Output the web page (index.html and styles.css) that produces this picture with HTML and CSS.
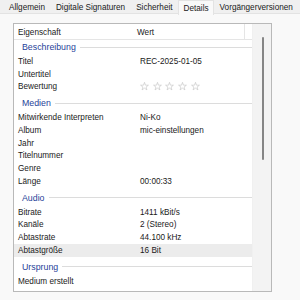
FILE: index.html
```html
<!DOCTYPE html>
<html>
	<head>
		<meta charset="UTF-8">
		<title>Eigenschaften</title>
		<link rel="stylesheet" href="styles.css">
	</head>
	<body>
		<div class="tabs">
			<span class="tab first">Allgemein</span>
			<span class="tab">Digitale Signaturen</span>
			<span class="tab">Sicherheit</span>
			<span class="tab active">Details</span>
			<span class="tab">Vorgängerversionen</span>
		</div>
		<div class="panel">
			<div class="list">
				<div class="view">
					<div class="head">
						<span class="c1">Eigenschaft</span>
						<span class="c2">Wert</span>
					</div>
					<div class="group first">Beschreibung</div>
					<div class="row"><span>Titel</span><span>REC-2025-01-05</span></div>
					<div class="row"><span>Untertitel</span><span></span></div>
					<div class="row">
						<span>Bewertung</span>
						<span class="stars">
							<svg viewBox="0 0 10 10"><polygon points="5,0.4 6.09,3.5 9.37,3.58 6.76,5.57 7.7,8.72 5,6.85 2.3,8.72 3.24,5.57 0.63,3.58 3.91,3.5"/></svg>
							<svg viewBox="0 0 10 10"><polygon points="5,0.4 6.09,3.5 9.37,3.58 6.76,5.57 7.7,8.72 5,6.85 2.3,8.72 3.24,5.57 0.63,3.58 3.91,3.5"/></svg>
							<svg viewBox="0 0 10 10"><polygon points="5,0.4 6.09,3.5 9.37,3.58 6.76,5.57 7.7,8.72 5,6.85 2.3,8.72 3.24,5.57 0.63,3.58 3.91,3.5"/></svg>
							<svg viewBox="0 0 10 10"><polygon points="5,0.4 6.09,3.5 9.37,3.58 6.76,5.57 7.7,8.72 5,6.85 2.3,8.72 3.24,5.57 0.63,3.58 3.91,3.5"/></svg>
							<svg viewBox="0 0 10 10"><polygon points="5,0.4 6.09,3.5 9.37,3.58 6.76,5.57 7.7,8.72 5,6.85 2.3,8.72 3.24,5.57 0.63,3.58 3.91,3.5"/></svg>
						</span>
					</div>
					<div class="group">Medien</div>
					<div class="row"><span>Mitwirkende Interpreten</span><span>Ni-Ko</span></div>
					<div class="row"><span>Album</span><span>mic-einstellungen</span></div>
					<div class="row"><span>Jahr</span><span></span></div>
					<div class="row"><span>Titelnummer</span><span></span></div>
					<div class="row"><span>Genre</span><span></span></div>
					<div class="row"><span>Länge</span><span>00:00:33</span></div>
					<div class="group">Audio</div>
					<div class="row"><span>Bitrate</span><span>1411 kBit/s</span></div>
					<div class="row"><span>Kanäle</span><span>2 (Stereo)</span></div>
					<div class="row"><span>Abtastrate</span><span>44.100 kHz</span></div>
					<div class="row hover"><span>Abtastgröße</span><span>16 Bit</span></div>
					<div class="group">Ursprung</div>
					<div class="row"><span>Medium erstellt</span><span></span></div>
				</div>
				<div class="scroll">
					<div class="thumb"></div>
				</div>
			</div>
		</div>
	</body>
</html>
```

FILE: styles.css
```css
body {
	margin: 0;
	background: #f9f9f9;
	font-family: "Liberation Sans", Arial, sans-serif;
	font-size: 8.2px;
	color: #1a1a1a;
}

/* tabs */
.tabs {
	display: flex;
	height: 14px;
	background: #f0f0f0;
	border-bottom: 1px solid #e3e3e3;
	box-sizing: border-box;
	padding-left: 3.5px;
}

.tab {
	display: flex;
	align-items: center;
	height: 14px;
	padding: 0 5.5px;
	box-sizing: border-box;
	white-space: nowrap;
}

.tab.active {
	background: #f9f9f9;
	height: 15px;
	border: 1px solid #e3e3e3;
	border-bottom: 0;
	padding: 0 4.5px;
}

/* panel */
.panel {
	padding: 9px 0 0 13px;
}

.list {
	display: flex;
	width: 259px;
	height: 269px;
	border: 1px solid #b9b9b9;
	box-sizing: border-box;
	background: #fff;
	overflow: hidden;
}

.view {
	width: 239px;
	overflow: hidden;
}

.head {
	display: grid;
	grid-template-columns: 122px 109px;
	height: 15.85px;
	border-bottom: 1px solid #e5e5e5;
	box-sizing: border-box;
}

.head span {
	display: flex;
	align-items: center;
	padding-top: 3px;
}

.head .c1 {
	padding-left: 4px;
}

.head .c2 {
	padding-left: 1px;
	border-right: 1px solid #e5e5e5;
}

.group {
	display: flex;
	align-items: center;
	gap: 4px;
	height: 18.3px;
	padding: 2px 0 0 8px;
	box-sizing: border-box;
	color: #1f3f99;
	font-size: 8.8px;
}

.group.first {
	height: 15.3px;
	padding-top: 0;
}

.group::after {
	content: "";
	flex: 1;
	height: 1px;
	background: #dcdcdc;
}

.row {
	display: grid;
	grid-template-columns: 122px 109px;
	height: 12.7px;
	align-items: center;
	white-space: nowrap;
}

.row span {
	padding-left: 4px;
}

.row.hover {
	background: #ececec;
}

.stars {
	display: flex;
	gap: 3.7px;
}

.stars svg {
	width: 9px;
	height: 9px;
	fill: none;
	stroke: #c4c4c4;
	stroke-width: 0.7;
}

.scroll {
	width: 18px;
	background: #f3f3f3;
	padding-top: 13px;
	border-left: 1px solid #f0f0f0;
}

.thumb {
	width: 2px;
	height: 123px;
	margin-left: 9px;
	background: #858585;
	border-radius: 1px;
}
```
